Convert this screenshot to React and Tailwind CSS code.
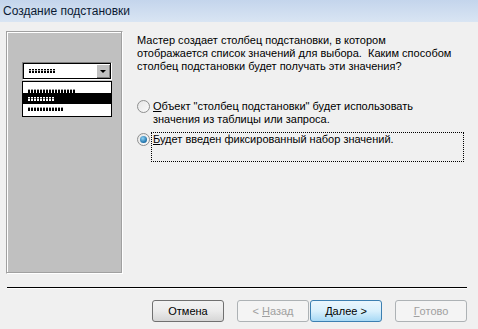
const FONT = { fontFamily: '"Liberation Sans", Arial, sans-serif' }

// dithered placeholder "text" used in the preview picture
function Fake({ w, on }) {
  return (
    <div
      className={`h-[4px] ${on ? 'bg-[repeating-linear-gradient(90deg,#fff_0_2px,transparent_2px_3px)]' : 'bg-[repeating-linear-gradient(90deg,#000_0_2px,transparent_2px_3px)]'}`}
      style={{ width: w }}
    >
      <div className={`h-[1px] mt-[1px] ${on ? 'bg-black/50' : 'bg-white/60'}`} />
    </div>
  )
}

function Radio({ checked }) {
  return (
    <div className="w-[13px] h-[13px] shrink-0 rounded-full border border-[#8e8f8f] bg-gradient-to-br from-[#e6e6e6] to-[#fafafa] flex items-center justify-center">
      {checked && (
        <div className="w-[7px] h-[7px] rounded-full bg-[radial-gradient(circle_at_40%_35%,#8fd3f5,#1c6fa8_70%,#0d4a80)]" />
      )}
    </div>
  )
}

function Btn({ children, kind }) {
  const styles = {
    normal: 'border-[#707070] bg-gradient-to-b from-[#f2f2f2] via-[#ebebeb] to-[#d6d6d6] text-black',
    focus: 'border-[#3c7fb1] bg-gradient-to-b from-[#eaf6fd] via-[#d9f0fc] to-[#a7d9f5] text-black',
    off: 'border-[#adb2b5] bg-[#f4f4f4] text-[#a0a0a0]',
  }
  return (
    <div className={`w-[72px] h-[22px] rounded-[3px] border flex items-center justify-center text-[11px] ${styles[kind]}`}>
      {children}
    </div>
  )
}

export default function App() {
  return (
    <div className="w-[478px] h-[329px] bg-[#f0f0f0] flex flex-col overflow-hidden text-black" style={FONT}>
      {/* ── Title bar ── */}
      <div className="h-[22px] bg-gradient-to-b from-[#c4d5ec] to-[#d9e5f3] flex items-center pl-[3px] text-[12px] text-[#0b1a33]">
        Создание подстановки
      </div>

      <div className="flex pl-[6px] pt-[9px] h-[253px]">
        {/* ── Preview panel ── */}
        <div className="w-[117px] h-[243px] border border-[#a0a0a0] border-r-white border-b-white shadow-[inset_-1px_-1px_0_#a0a0a0,inset_1px_1px_0_#fff] bg-[#c0c0c0] pt-[30px] pl-[15px] shrink-0">
          <div className="w-[90px] h-[18px] border border-[#808080] border-r-white border-b-white bg-white flex">
            <div className="flex-1 border border-black border-r-0 flex items-center pl-[5px]">
              <Fake w={27} />
            </div>
            <div className="w-[15px] border-y border-r border-black bg-[#c0c0c0] flex items-center justify-center shadow-[inset_1px_1px_0_#fff,inset_-1px_-1px_0_#808080]">
              <div className="w-0 h-0 border-l-[3px] border-r-[3px] border-t-[3px] border-l-transparent border-r-transparent border-t-black" />
            </div>
          </div>
          <div className="w-[90px] h-[36px] mt-[1px] border border-black bg-white pt-[6px] flex flex-col">
            <div className="h-[4px] pl-[5px]"><Fake w={47} /></div>
            <div className="h-[11px] mt-[1px] bg-black flex items-center pl-[5px]"><Fake w={27} on /></div>
            <div className="h-[4px] mt-[2px] pl-[5px]"><Fake w={35} /></div>
          </div>
        </div>

        {/* ── Right column ── */}
        <div className="ml-[14px] pt-[3px] flex flex-col text-[11px] leading-[13px]">
          <p className="w-[320px]">
            Мастер создает столбец подстановки, в котором отображается список значений для выбора.&nbsp; Каким способом столбец подстановки будет получать эти значения?
          </p>

          <div className="flex items-start mt-[27px]">
            <div className="mt-0"><Radio /></div>
            <div className="ml-[3px]">
              <div><span className="underline">О</span>бъект "столбец подстановки" будет использовать</div>
              <div>значения из таблицы или запроса.</div>
            </div>
          </div>

          <div className="flex items-start mt-[6px]">
            <div className="mt-[1px]"><Radio checked /></div>
            <div className="ml-[1px] w-[313px] h-[30px] border border-dotted border-black pl-[1px]">
              <span className="underline">Б</span>удет введен фиксированный набор значений.
            </div>
          </div>
        </div>
      </div>

      {/* ── Separator ── */}
      <div className="ml-[7px] w-[460px] h-[2px] border-t border-[#000] border-b border-b-white mt-[12px]" />

      {/* ── Buttons ── */}
      <div className="flex pl-[152px] mt-[11px]">
        <Btn kind="normal">Отмена</Btn>
        <div className="ml-[13px]"><Btn kind="off">&lt;&nbsp;<span className="underline">Н</span>азад</Btn></div>
        <div className="ml-[1px]"><Btn kind="focus"><span className="underline">Д</span>алее &gt;</Btn></div>
        <div className="ml-[13px]"><Btn kind="off"><span className="underline">Г</span>отово</Btn></div>
      </div>
    </div>
  )
}
